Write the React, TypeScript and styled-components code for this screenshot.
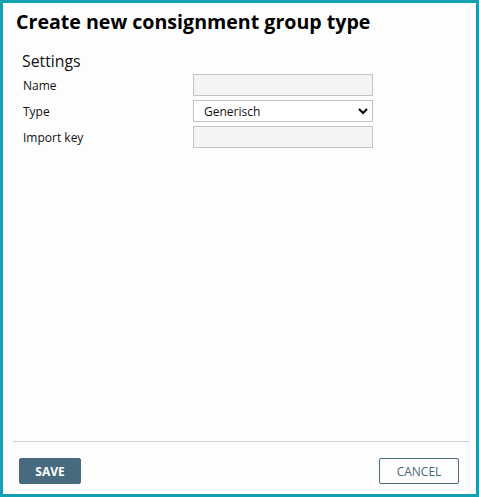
import React from "react";
import styled, { createGlobalStyle } from "styled-components";

const Global = createGlobalStyle`
  html, body { margin: 0; padding: 0; background: #fdfdfd; }
  * { box-sizing: border-box; }
`;

const Frame = styled.div`
  width: 479px;
  height: 497px;
  border: 3px solid #13a0b1;
  background: #fdfdfd;
  display: flex;
  flex-direction: column;
  font-family: "Open Sans", "Noto Sans", sans-serif;
  color: #111;
`;

const Title = styled.h1`
  margin: 0;
  padding: 6px 0 0 13px;
  font-size: 19.6px;
  font-weight: 700;
  line-height: 26px;
  color: #000;
`;

const Body = styled.div`
  flex: 1;
  padding: 16px 0 0 19px;
`;

const Section = styled.h2`
  margin: 0 0 3px 0;
  font-size: 15.8px;
  font-weight: 400;
  line-height: 20px;
  color: #111;
`;

const Row = styled.div`
  display: grid;
  grid-template-columns: 171px 180px;
  align-items: center;
  height: 22px;
  margin-bottom: 4px;
`;

const Label = styled.label`
  font-size: 12px;
  padding-left: 1px;
  color: #111;
`;

const Input = styled.input`
  width: 180px;
  height: 22px;
  border: 1px solid #c3c3c3;
  background: #f4f4f4;
  outline: none;
`;

const SelectBox = styled.div`
  position: relative;
  width: 180px;
  height: 22px;
  border: 1px solid #c3c3c3;
  background: #fff;
  display: flex;
  align-items: center;
  padding-left: 10px;
  font-size: 12px;
  color: #111;
`;

const Chevron = styled.svg`
  position: absolute;
  right: 4px;
  top: 6px;
`;

const Footer = styled.div`
  margin: 0 7px 0 10px;
  border-top: 1px solid #cbd2d8;
  padding: 16px 10px 10px 6px;
  display: flex;
  justify-content: space-between;
`;

const Button = styled.button<{ $primary?: boolean }>`
  height: 26px;
  border-radius: 2px;
  font-family: "Open Sans", "Noto Sans", sans-serif;
  font-size: 12px;
  cursor: pointer;
  padding: 0;
  border: 1px solid #476a7f;
  background: ${(p) => (p.$primary ? "#476a7f" : "#fdfdfd")};
  color: ${(p) => (p.$primary ? "#fff" : "#476a7f")};
  font-weight: ${(p) => (p.$primary ? 700 : 400)};
  width: ${(p) => (p.$primary ? "62px" : "80px")};
`;

export default function App() {
  return (
    <>
      <Global />
      <Frame>
        <Title>Create new consignment group type</Title>
        <Body>
          <Section>Settings</Section>
          <Row>
            <Label>Name</Label>
            <Input />
          </Row>
          <Row>
            <Label>Type</Label>
            <SelectBox>
              Generisch
              <Chevron width="10" height="8" viewBox="0 0 10 8">
                <path d="M1 2 L5 6 L9 2" fill="none" stroke="#000" strokeWidth="2" />
              </Chevron>
            </SelectBox>
          </Row>
          <Row>
            <Label>Import key</Label>
            <Input />
          </Row>
        </Body>
        <Footer>
          <Button $primary>SAVE</Button>
          <Button>CANCEL</Button>
        </Footer>
      </Frame>
    </>
  );
}
